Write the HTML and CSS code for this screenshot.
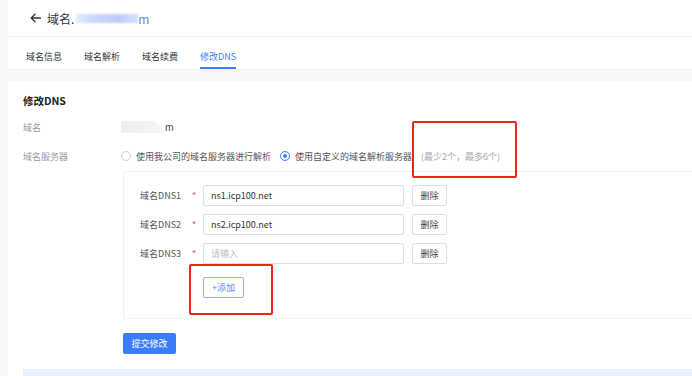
FILE: index.html
```html
<!DOCTYPE html>
<html lang="zh">
<head>
<meta charset="utf-8">
<title>修改DNS</title>
<link rel="stylesheet" href="styles.css">
</head>
<body>
<div class="page">
  <div class="top">
    <div class="header">
      <svg class="back" width="11" height="10" viewBox="0 0 11 10"><path d="M10.5 5H1.2M5 1.2L1.2 5L5 8.8" fill="none" stroke="#333" stroke-width="1.3" stroke-linecap="round" stroke-linejoin="round"/></svg>
      <span class="htitle">域名.</span><span class="hblur"></span><span class="hm">m</span>
    </div>
    <div class="tabs">
      <span class="tab">域名信息</span>
      <span class="tab">域名解析</span>
      <span class="tab">域名续费</span>
      <span class="tab active">修改DNS</span>
    </div>
  </div>

  <div class="card">
    <div class="title">修改DNS</div>
    <div class="row">
      <span class="label">域名</span>
      <span class="value"><span class="vblur"></span><span class="vm">m</span></span>
    </div>
    <div class="row">
      <span class="label">域名服务器</span>
      <span class="value radios">
        <span class="radio"><span class="circle"></span>使用我公司的域名服务器进行解析</span>
        <span class="radio"><span class="circle on"></span>使用自定义的域名解析服务器</span>
        <span class="hint">(最少2个，最多6个)</span>
      </span>
    </div>

    <div class="dnsbox">
      <div class="dnsrow">
        <span class="dlabel">域名DNS1</span><span class="star">*</span>
        <span class="input">ns1.icp100.net</span>
        <span class="del">删除</span>
      </div>
      <div class="dnsrow">
        <span class="dlabel">域名DNS2</span><span class="star">*</span>
        <span class="input">ns2.icp100.net</span>
        <span class="del">删除</span>
      </div>
      <div class="dnsrow">
        <span class="dlabel">域名DNS3</span><span class="star">*</span>
        <span class="input ph">请输入</span>
        <span class="del">删除</span>
      </div>
      <div class="addrow"><span class="add">+添加</span></div>
    </div>

    <div class="submitrow"><span class="submit">提交修改</span></div>
    <div class="band"></div>
  </div>
</div>
<div class="mark mark1"></div>
<div class="mark mark2"></div>
</body>
</html>
```

FILE: styles.css
```css
html, body {
  margin: 0;
  padding: 0;
  overflow: hidden;
  background: #f6f7f9;
  font-family: "Noto Sans CJK SC", "Noto Sans", sans-serif;
  font-size: 9px;
  color: #333;
}
.page {
  width: 100%;
  height: 376px;
  display: flex;
  flex-direction: column;
}
.top {
  margin-left: 8px;
  background: #fff;
}
.header {
  height: 37px;
  border-bottom: 1px solid #eef0f3;
  box-sizing: border-box;
  display: flex;
  align-items: center;
  padding-left: 22px;
}
.back { margin-right: 6px; }
.htitle {
  font-size: 12px;
  color: #333;
}
.hblur {
  display: inline-block;
  width: 62px;
  height: 9px;
  margin-left: 2px;
  background: linear-gradient(90deg, #e4ebfb 0%, #c9d7fb 30%, #bccdfa 70%, #d7e1fb 100%);
  filter: blur(1px);
}
.hm {
  font-size: 12px;
  color: #6b86d8;
}
.tabs {
  height: 33px;
  display: flex;
  gap: 22px;
  padding-left: 18px;
  box-sizing: border-box;
  border-bottom: 1px solid #eef0f3;
}
.tab {
  display: flex;
  align-items: center;
  padding-top: 8px;
  box-sizing: border-box;
  color: #333;
  border-bottom: 2px solid transparent;
}
.tab.active {
  color: #3d7dff;
  border-bottom-color: #3d7dff;
}
.card {
  margin-top: 11px;
  margin-left: 8px;
  background: #fff;
  padding: 13px 0 0 15px;
  flex: 1;
}
.title {
  font-size: 10.5px;
  font-weight: bold;
  line-height: 14px;
  color: #222;
}
.row {
  display: flex;
  align-items: center;
  height: 20px;
  margin-top: 9px;
}
.label {
  width: 98px;
  color: #999;
}
.value { display: flex; align-items: center; }
.vblur {
  display: inline-block;
  width: 42px;
  height: 12px;
  background: linear-gradient(90deg, #eeeeee 0%, #f2f2f2 60%, #f7f7f7 100%);
  clip-path: polygon(0 0, 80% 0, 100% 60%, 100% 100%, 0 100%);
}
.vm { color: #444; margin-left: 2px; font-size: 9.5px; }
.radio {
  display: flex;
  align-items: center;
  color: #555;
  margin-right: 9px;
}
.radio + .radio { margin-right: 9px; }
.circle {
  width: 10px;
  height: 10px;
  box-sizing: border-box;
  border: 1px solid #cfd3da;
  border-radius: 50%;
  margin-right: 5px;
  position: relative;
  background: #fff;
}
.circle.on {
  border-color: #3d7dff;
}
.circle.on::after {
  content: "";
  position: absolute;
  left: 2px;
  top: 2px;
  width: 4px;
  height: 4px;
  border-radius: 50%;
  background: #3d7dff;
}
.hint { color: #a3a9b6; }
.dnsbox {
  margin-top: 5px;
  margin-left: 100px;
  border: 1px solid #eef0f3;
  border-right: none;
  border-radius: 3px 0 0 3px;
  padding: 13px 0 20px 16px;
  display: flex;
  flex-direction: column;
  gap: 8px;
}
.dnsrow {
  display: flex;
  align-items: center;
  height: 21px;
}
.dlabel {
  width: 52px;
  color: #555;
}
.star {
  color: #e25656;
  width: 11px;
}
.input {
  width: 201px;
  height: 21px;
  box-sizing: border-box;
  border: 1px solid #dcdfe5;
  border-radius: 2px;
  display: flex;
  align-items: center;
  padding-left: 7px;
  color: #333;
}
.input.ph { color: #bbbfc6; }
.del {
  margin-left: 8px;
  width: 35px;
  height: 21px;
  box-sizing: border-box;
  border: 1px solid #dcdfe5;
  border-radius: 2px;
  display: flex;
  align-items: center;
  justify-content: center;
  color: #444;
}
.addrow {
  margin-top: 5px;
  padding-left: 63px;
  display: flex;
}
.add {
  width: 41px;
  height: 21px;
  box-sizing: border-box;
  border: 1px solid #8fb1ff;
  border-radius: 2px;
  display: flex;
  align-items: center;
  justify-content: center;
  color: #5a8cf5;
}
.submitrow {
  margin-top: 14px;
  margin-left: 100px;
  display: flex;
}
.submit {
  width: 53px;
  height: 21px;
  border-radius: 2px;
  background: #3b7cfd;
  color: #fff;
  display: flex;
  align-items: center;
  justify-content: center;
}
.band {
  margin-top: 15px;
  height: 10px;
  background: #e9f0fd;
}
.mark {
  position: absolute;
  border: 2px solid #f2231b;
  border-radius: 2px;
  box-sizing: border-box;
}
.mark1 { left: 412px; top: 121px; width: 105px; height: 57px; }
.mark2 { left: 189px; top: 264px; width: 84px; height: 51px; }
```
